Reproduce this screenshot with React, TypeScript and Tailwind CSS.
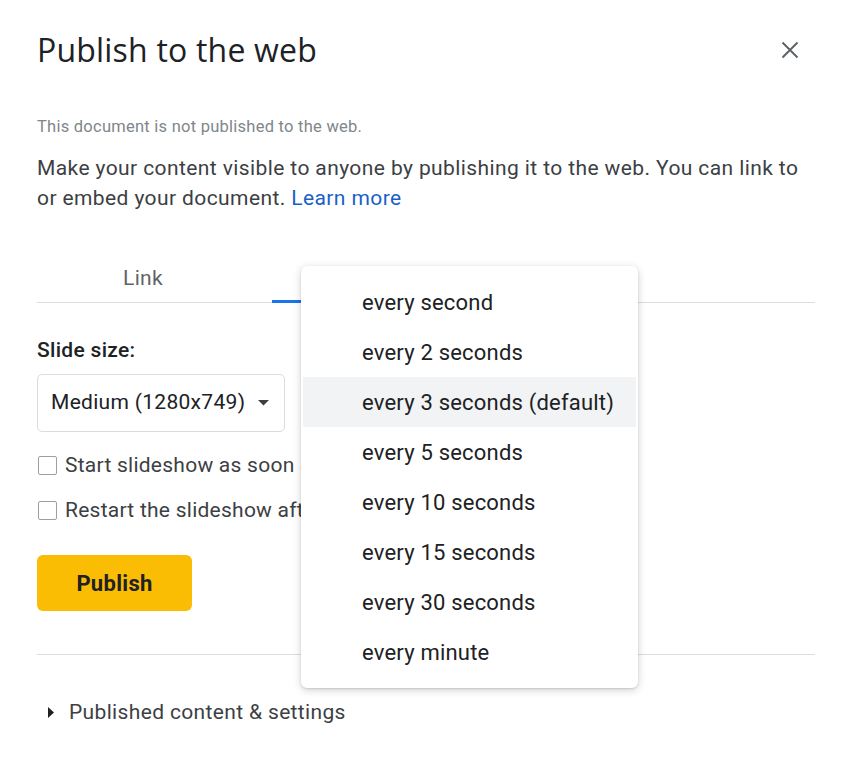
import React from "react";

const options = [
  "every second",
  "every 2 seconds",
  "every 3 seconds (default)",
  "every 5 seconds",
  "every 10 seconds",
  "every 15 seconds",
  "every 30 seconds",
  "every minute",
];

function Checkbox({ label }: { label: string }) {
  return (
    <div className="flex items-center h-[24px] whitespace-nowrap">
      <span className="ml-[1px] w-[19px] h-[19px] border border-[#9aa0a6] rounded-[2px] bg-white shrink-0" />
      <span className="ml-[8px] text-[21px] tracking-[0.25px] leading-[24px] text-[#3c4043]">{label}</span>
    </div>
  );
}

export default function App() {
  return (
    <div
      className="relative w-[850px] h-[761px] bg-white overflow-hidden pl-[37px] pr-[35px]"
      style={{ fontFamily: "Roboto, 'Noto Sans', Arial, sans-serif" }}
    >
      <div className="pt-[30px] flex items-center justify-between h-[70px]">
        <h1
          className="text-[32px] tracking-[0.2px] leading-[40px] text-[#202124] font-normal"
          style={{ fontFamily: "'Open Sans', Roboto, sans-serif" }}
        >
          Publish to the web
        </h1>
        <button className="mr-[16px] w-[18px] h-[18px] flex items-center justify-center">
          <svg width="18" height="18" viewBox="0 0 18 18" fill="none" stroke="#5f6368" strokeWidth="2">
            <path d="M1.5 1.5L16.5 16.5M16.5 1.5L1.5 16.5" />
          </svg>
        </button>
      </div>

      <p className="mt-[47px] text-[16.5px] tracking-[0.25px] leading-[20px] text-[#80868b]">
        This document is not published to the web.
      </p>
      <p className="mt-[16px] text-[21px] tracking-[0.4px] leading-[30px] text-[#3c4043]">
        Make your content visible to anyone by publishing it to the web. You can link to or embed your document.{" "}
        <span className="text-[#1a5fc8]">Learn more</span>
      </p>

      <div className="mt-[42px] flex border-b border-[#dadce0] h-[48px]">
        <div className="w-[212px] h-[47px] flex items-center justify-center text-[21px] tracking-[0.3px] text-[#5f6368]">
          Link
        </div>
        <div className="ml-[23px] w-[130px] h-[48px] flex items-center justify-center text-[21px] text-[#1a73e8] border-b-[3px] border-[#1a73e8]">
          Embed
        </div>
      </div>

      <div className="mt-[35px] text-[21px] tracking-[0.3px] leading-[24px] font-medium text-[#202124]">Slide size:</div>
      <div className="mt-[12px] w-[248px] h-[58px] border border-[#dadce0] rounded-[5px] flex items-center pl-[13px]">
        <span className="text-[21px] tracking-[0.3px] text-[#202124]">Medium (1280x749)</span>
        <svg className="ml-[13px]" width="11" height="6" viewBox="0 0 11 6">
          <path d="M0 0L11 0L5.5 5.5Z" fill="#3c4043" />
        </svg>
      </div>

      <div className="mt-[21px]">
        <Checkbox label="Start slideshow as soon as the player loads" />
      </div>
      <div className="mt-[21px]">
        <Checkbox label="Restart the slideshow after the last slide" />
      </div>

      <button className="mt-[33px] w-[155px] h-[56px] rounded-[6px] bg-[#fbbc04] text-[22px] tracking-[0.3px] font-bold text-[#202124] flex items-center justify-center">
        Publish
      </button>

      <div className="mt-[43px] h-px bg-[#dadce0]" />

      <div className="mt-[45px] flex items-center h-[24px]">
        <svg className="ml-[11px]" width="6" height="11" viewBox="0 0 6 11">
          <path d="M0 0L6 5.5L0 11Z" fill="#202124" />
        </svg>
        <span className="ml-[15px] text-[21px] tracking-[0.35px] leading-[24px] text-[#3c4043]">
          Published content &amp; settings
        </span>
      </div>

      <div className="absolute left-[301px] top-[266px] w-[337px] h-[422px] bg-white rounded-[6px] shadow-[0_2px_8px_rgba(0,0,0,0.18),0_1px_2px_rgba(0,0,0,0.12)] py-[11px] px-[2px]">
        {options.map((o, i) => (
          <div
            key={o}
            className={`h-[50px] flex items-center pl-[59px] text-[22px] tracking-[0.2px] text-[#202124] ${
              i === 2 ? "bg-[#f1f3f4]" : ""
            }`}
          >
            {o}
          </div>
        ))}
      </div>
    </div>
  );
}
